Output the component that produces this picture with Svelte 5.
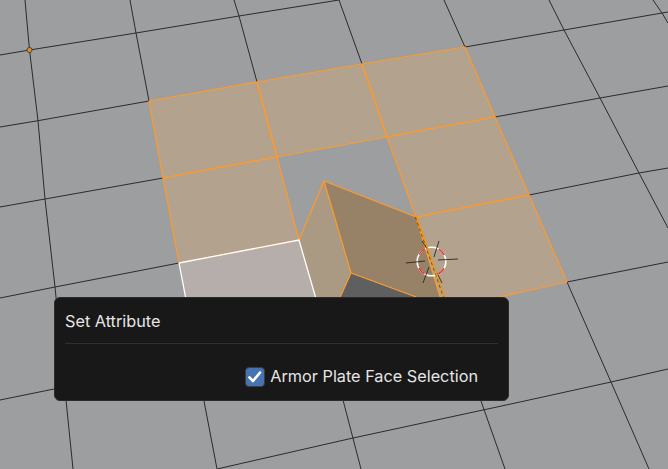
<script>
    // grid segments, left out where the selected faces draw their own edges
    const gridLines = [
        "0,55 29.5,50 136,33 239,16 339,0",
        "0,127 38,120.7 149,101",
        "465,47 564,30 662,13 668,12",
        "0,207 45,199 163,178",
        "495,117 600,98 668,86",
        "0,298 55,287 179,263",
        "529,195 639,173 668,168",
        "0,400 54,389",
        "567,282 668,262",
        "217,469 353,438 483,410 520,402 611,382 668,369",
        "25,0 29.5,50 38,120.7 45,199 55,287 66,400 73,469",
        "130,0 136,33 149,101",
        "204,401 217,469",
        "234,0 239,16 257,82",
        "343,400 361,469",
        "339,0 362,64",
        "481,401 505,469",
        "444,0 465,47",
        "567,282 611,382 649,469",
        "549,0 564,30 600,98 639,173 668,228",
        "653,0 662,13 668,23"
    ];

    const faces = [
        "149,101 257,82 277,157 163,178",
        "257,82 362,64 387,137 277,157",
        "362,64 465,47 495,117 387,137",
        "387,137 495,117 529,195 416,217",
        "416,217 529,195 567,282 500,297 444,310",
        "163,178 277,157 299,240 179,263"
    ];

    const cursorTicks = [
        [406, 263, 425, 261],
        [438, 260, 458, 259],
        [439, 241, 434, 257],
        [423, 283, 429, 267],
        [422, 241, 428, 250],
        [437, 273, 442, 283]
    ];
</script>

<main class="viewport">
    <svg class="scene" viewBox="0 0 668 469" aria-hidden="true">
        {#each gridLines as pts}
            <polyline points={pts} class="grid" />
        {/each}

        <polygon points="179,263 299,240 325,330 190,330" class="active" />
        <polygon points="351,273 330,320 440,320 416,297" class="hole" />
        <polygon points="299,240 324,181 351,273 325,330" class="wall" />
        <polygon points="324,181 416,217 450,320 416,297 351,273" class="wall-dark" />

        {#each faces as pts}
            <polygon points={pts} class="face" />
        {/each}
        {#each faces as pts}
            <polygon points={pts} class="edge" />
        {/each}

        <polyline points="324,181 351,273" class="edge" />
        <polyline points="299,240 324,181 416,217" class="edge" />
        <polyline points="351,273 330,320" class="edge" />
        <polyline points="351,273 416,297" class="edge" />

        <polyline points="179,263 299,240 325,330" class="edge-white" />
        <polyline points="179,263 190,320" class="edge-white" />

        <circle cx="431.5" cy="261.5" r="14.3" class="ring-white" />
        <circle cx="431.5" cy="261.5" r="14.3" class="ring-red" />
        {#each cursorTicks as t}
            <line x1={t[0]} y1={t[1]} x2={t[2]} y2={t[3]} class="tick" />
        {/each}

        <line x1="415.7" y1="217" x2="449.7" y2="314" class="active-under" />
        <line x1="416.6" y1="217" x2="450.6" y2="314" class="active-over" />

        <circle cx="29.5" cy="50" r="2.6" class="origin" />
    </svg>

    <section class="panel">
        <h1>Set Attribute</h1>
        <div class="divider"></div>
        <label class="row">
            <span class="check">
                <svg viewBox="0 0 18 18" aria-hidden="true">
                    <path d="M3.4 9.4 L7 13 L14 4.6" />
                </svg>
            </span>
            Armor Plate Face Selection
        </label>
    </section>
</main>

<style>
    :global(body) {
        background: #9d9ea0;
    }

    .viewport {
        position: relative;
        width: 668px;
        height: 469px;
        overflow: hidden;
        background: #9d9ea0;
        font-family: Inter, "Noto Sans", sans-serif;
    }

    .scene {
        display: block;
        width: 100%;
        height: 100%;
    }

    .grid {
        fill: none;
        stroke: #2b2b2b;
        stroke-width: 1;
    }

    .face {
        fill: #b3a28d;
    }

    .active {
        fill: #b5aeaa;
    }

    .hole {
        fill: #5f5f5f;
    }

    .wall {
        fill: #aa9a83;
    }

    .wall-dark {
        fill: #978267;
    }

    .edge {
        fill: none;
        stroke: #ff9a2b;
        stroke-width: 1.2;
        stroke-linejoin: round;
    }

    .edge-white {
        fill: none;
        stroke: #fff;
        stroke-width: 1.3;
    }

    .active-under {
        stroke: #2a1c08;
        stroke-width: 1.2;
        stroke-dasharray: 3 3;
        opacity: 0.8;
    }

    .active-over {
        stroke: #f0950f;
        stroke-width: 1.6;
    }

    .ring-white {
        fill: none;
        stroke: #fff;
        stroke-width: 1.6;
    }

    .ring-red {
        fill: none;
        stroke: #e8312f;
        stroke-width: 1.6;
        stroke-dasharray: 8 14.45;
        stroke-dashoffset: -7.2;
    }

    .tick {
        stroke: #222;
        stroke-width: 1;
        opacity: 0.85;
    }

    .origin {
        fill: #e08a22;
        stroke: #333;
        stroke-width: 0.8;
    }

    .panel {
        position: absolute;
        left: 54px;
        top: 297px;
        box-sizing: border-box;
        width: 455px;
        height: 104px;
        padding: 0 10px;
        display: flex;
        flex-direction: column;
        background: #181818;
        border: 1px solid #2b2b2b;
        border-radius: 6px;
        color: #e6e6e6;
    }

    h1 {
        margin: 0;
        height: 45px;
        display: flex;
        align-items: center;
        font-size: 16.25px;
        font-weight: 400;
    }

    .divider {
        height: 1px;
        background: #2f2f2f;
    }

    .row {
        display: flex;
        align-items: center;
        justify-content: flex-end;
        gap: 5px;
        margin-top: 21px;
        padding-right: 20px;
        font-size: 16.25px;
        line-height: 22px;
    }

    .check {
        box-sizing: border-box;
        width: 20px;
        height: 20px;
        margin-top: 2px;
        background: #4772b3;
        border: 1px solid #3d3d3d;
        border-radius: 4px;
    }

    .check svg {
        display: block;
        width: 18px;
        height: 18px;
    }

    .check path {
        fill: none;
        stroke: #fff;
        stroke-width: 2.6;
        stroke-linecap: round;
        stroke-linejoin: round;
    }
</style>
